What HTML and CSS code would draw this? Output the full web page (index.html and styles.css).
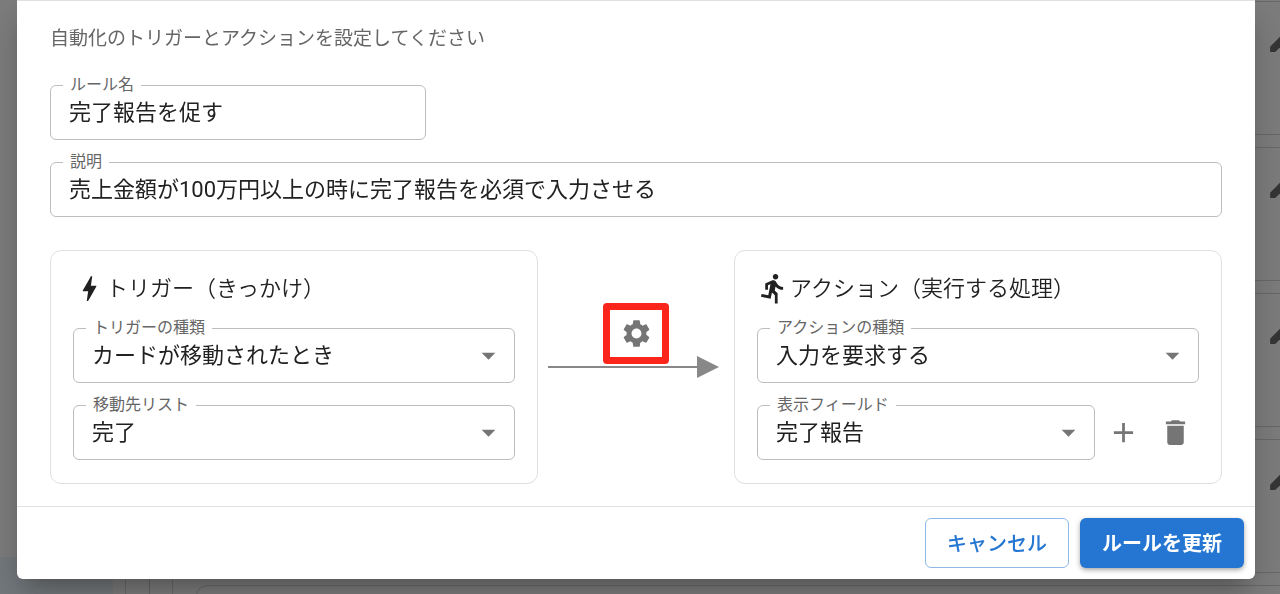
FILE: index.html
```html
<!DOCTYPE html>
<html lang="ja">
<head>
  <meta charset="UTF-8">
  <title>ルールの編集</title>
  <link rel="stylesheet" href="styles.css">
</head>
<body>
  <div class="app" aria-hidden="true">
    <div class="sidebar"><div class="sidebar-item"></div></div>
    <div class="board">
      <div class="board-inner">
        <div class="list">
          <div class="card"><svg class="icon" viewBox="0 0 24 24"><path d="M3 17.25V21h3.75L17.81 9.94l-3.75-3.75L3 17.25z"/></svg></div>
          <div class="card"><svg class="icon" viewBox="0 0 24 24"><path d="M3 17.25V21h3.75L17.81 9.94l-3.75-3.75L3 17.25z"/></svg></div>
          <div class="card"><svg class="icon" viewBox="0 0 24 24"><path d="M3 17.25V21h3.75L17.81 9.94l-3.75-3.75L3 17.25z"/></svg></div>
          <div class="card"><svg class="icon" viewBox="0 0 24 24"><path d="M3 17.25V21h3.75L17.81 9.94l-3.75-3.75L3 17.25z"/></svg></div>
          <div class="card"></div>
        </div>
      </div>
    </div>
  </div>

  <div class="backdrop">
    <form class="dialog" role="dialog" aria-describedby="lead">
      <div class="dialog-body">
        <p class="lead" id="lead">自動化のトリガーとアクションを設定してください</p>

        <div class="fields">
          <div class="field field-short">
            <label for="name">ルール名</label>
            <input type="text" id="name" value="完了報告を促す">
          </div>
          <div class="field">
            <label for="description">説明</label>
            <input type="text" id="description" value="売上金額が100万円以上の時に完了報告を必須で入力させる">
          </div>
        </div>

        <div class="flow">
          <section class="panel">
            <h2>
              <svg class="icon" viewBox="0 0 24 24"><path d="M11 21h-1l1-7H7.5c-.58 0-.57-.32-.38-.66.19-.34.05-.08.07-.12C8.48 10.94 10.42 7.54 13 3h1l-1 7h3.5c.49 0 .56.33.47.51l-.07.15C12.96 17.55 11 21 11 21z"/></svg>
              トリガー（きっかけ）
            </h2>
            <div class="fields">
              <div class="field">
                <label for="trigger">トリガーの種類</label>
                <select id="trigger"><option>カードが移動されたとき</option></select>
                <svg class="icon caret" viewBox="0 0 24 24"><path d="M7 10l5 5 5-5z"/></svg>
              </div>
              <div class="field">
                <label for="target">移動先リスト</label>
                <select id="target"><option>完了</option></select>
                <svg class="icon caret" viewBox="0 0 24 24"><path d="M7 10l5 5 5-5z"/></svg>
              </div>
            </div>
          </section>

          <div class="connector">
            <button type="button" class="condition" aria-label="条件を設定">
              <svg class="icon" viewBox="0 0 24 24"><path d="M19.14 12.94c.04-.3.06-.61.06-.94 0-.32-.02-.64-.07-.94l2.03-1.58c.18-.14.23-.41.12-.61l-1.92-3.32c-.12-.22-.37-.29-.59-.22l-2.39.96c-.5-.38-1.03-.7-1.62-.94l-.36-2.54c-.04-.24-.24-.41-.48-.41h-3.84c-.24 0-.43.17-.47.41l-.36 2.54c-.59.24-1.13.57-1.62.94l-2.39-.96c-.22-.08-.47 0-.59.22L2.74 8.87c-.12.21-.08.47.12.61l2.03 1.58c-.05.3-.09.63-.09.94s.02.64.07.94l-2.03 1.58c-.18.14-.23.41-.12.61l1.92 3.32c.12.22.37.29.59.22l2.39-.96c.5.38 1.03.7 1.62.94l.36 2.54c.05.24.24.41.48.41h3.84c.24 0 .44-.17.47-.41l.36-2.54c.59-.24 1.13-.56 1.62-.94l2.39.96c.22.08.47 0 .59-.22l1.92-3.32c.12-.22.07-.47-.12-.61l-2.01-1.58zM12 15.6c-1.98 0-3.6-1.62-3.6-3.6s1.62-3.6 3.6-3.6 3.6 1.62 3.6 3.6-1.62 3.6-3.6 3.6z"/></svg>
            </button>
            <div class="arrow">
              <span class="arrow-line"></span>
              <svg class="arrow-head" viewBox="0 0 22 22"><path d="M0 0l22 11L0 22z"/></svg>
            </div>
          </div>

          <section class="panel">
            <h2>
              <svg class="icon" viewBox="0 0 24 24"><path d="M13.49 5.48c1.1 0 2-.9 2-2s-.9-2-2-2-2 .9-2 2 .9 2 2 2zm-3.6 13.9l1-4.4 2.1 2v6h2v-7.5l-2.1-2 .6-3c1.3 1.5 3.3 2.5 5.5 2.5v-2c-1.9 0-3.5-1-4.3-2.4l-1-1.6c-.4-.6-1-1-1.7-1-.3 0-.5.1-.8.1l-5.2 2.2v4.7h2v-3.4l1.8-.7-1.6 8.1-4.9-1-.4 2 7 1.4z"/></svg>
              アクション（実行する処理）
            </h2>
            <div class="fields">
              <div class="field">
                <label for="action">アクションの種類</label>
                <select id="action"><option>入力を要求する</option></select>
                <svg class="icon caret" viewBox="0 0 24 24"><path d="M7 10l5 5 5-5z"/></svg>
              </div>
              <div class="field-row">
                <div class="field">
                  <label for="display">表示フィールド</label>
                  <select id="display"><option>完了報告</option></select>
                  <svg class="icon caret" viewBox="0 0 24 24"><path d="M7 10l5 5 5-5z"/></svg>
                </div>
                <button type="button" class="icon-button" aria-label="追加">
                  <svg class="icon" viewBox="0 0 24 24"><path d="M19 13h-6v6h-2v-6H5v-2h6V5h2v6h6v2z"/></svg>
                </button>
                <button type="button" class="icon-button" aria-label="削除">
                  <svg class="icon" viewBox="0 0 24 24"><path d="M6 19c0 1.1.9 2 2 2h8c1.1 0 2-.9 2-2V7H6v12zM19 4h-3.5l-1-1h-5l-1 1H5v2h14V4z"/></svg>
                </button>
              </div>
            </div>
          </section>
        </div>
      </div>

      <div class="dialog-actions">
        <button type="button" class="btn btn-outlined">キャンセル</button>
        <button type="submit" class="btn btn-primary">ルールを更新</button>
      </div>
    </form>
  </div>
</body>
</html>
```
FILE: styles.css
```css
* {
  box-sizing: border-box;
}

body {
  margin: 0;
  font-family: Roboto, "Noto Sans CJK JP", sans-serif;
  color: #212121;
}

input, select, button {
  font-family: inherit;
  color: inherit;
}

.icon {
  width: 33px;
  height: 33px;
  flex: none;
  fill: currentColor;
}

/* page behind the dialog */
.app {
  position: fixed;
  inset: 0;
  display: flex;
  overflow: hidden;
  background: #f8f8f8;
}

.sidebar {
  width: 113px;
  flex: none;
  display: flex;
  flex-direction: column;
  justify-content: flex-end;
}

.sidebar-item {
  height: 37px;
  background: #e6f0f8;
}

.board {
  flex: 1;
  margin-left: 12px;
  border-left: 1px solid #d4d4d4;
  padding-left: 23px;
}

.board-inner {
  border-left: 1px solid #c8c8c8;
  padding-left: 22px;
}

.list {
  display: flex;
  flex-direction: column;
  gap: 12px;
  margin-right: -31px;
  padding: 1px 0 0 23px;
  border-left: 1px solid #d4d4d4;
}

.card {
  display: flex;
  justify-content: flex-end;
  height: 134px;
  padding: 21px 11px;
  border: 1px solid #d0d0d0;
  border-radius: 11px;
  color: #6b6b6b;
}

/* dialog */
.backdrop {
  position: relative;
  min-height: 100vh;
  padding: 0 25px 15px 17px;
  background: rgba(0, 0, 0, 0.5);
}

.dialog {
  background: #fff;
  border-top: 1px solid #e0e0e0;
  border-radius: 0 0 6px 6px;
  box-shadow: 0 15px 21px -10px rgba(0, 0, 0, 0.2), 0 16px 36px 1px rgba(0, 0, 0, 0.18);
}

.dialog-body {
  padding: 24px 33px 22px;
}

.lead {
  margin: 0 0 32px;
  font-size: 19px;
  line-height: 28px;
  color: #666;
}

.fields {
  display: flex;
  flex-direction: column;
  gap: 22px;
}

.field {
  position: relative;
  flex: 1;
}

.field-short {
  width: 376px;
}

.field label {
  position: absolute;
  top: -10px;
  left: 13px;
  padding: 0 7px;
  background: #fff;
  font-size: 16px;
  line-height: 20px;
  color: #666;
}

.field input, .field select {
  display: block;
  width: 100%;
  height: 55px;
  padding: 0 18px;
  border: 1px solid #bdbdbd;
  border-radius: 6px;
  background: #fff;
  font-size: 22px;
  appearance: none;
}

.field input {
  padding-bottom: 6px;
}

.caret {
  position: absolute;
  top: 11px;
  right: 10px;
  color: #757575;
  pointer-events: none;
}

.flow {
  display: grid;
  grid-template-columns: 1fr 196px 1fr;
  margin-top: 33px;
}

.panel {
  padding: 21px 22px 23px;
  border: 1px solid #e0e0e0;
  border-radius: 11px;
}

.panel h2 {
  display: flex;
  align-items: center;
  margin: 0 0 23px;
  font-size: 22px;
  font-weight: 350;
  line-height: 32px;
}

.field-row {
  display: flex;
  align-items: center;
  gap: 4px;
}

.icon-button {
  display: flex;
  align-items: center;
  justify-content: center;
  width: 48px;
  height: 48px;
  padding: 0;
  border: none;
  border-radius: 50%;
  background: none;
  color: #757575;
  cursor: pointer;
}

.connector {
  display: flex;
  flex-direction: column;
  align-items: center;
  padding-top: 53px;
}

.condition {
  display: flex;
  align-items: center;
  justify-content: center;
  width: 66px;
  height: 61px;
  padding: 0;
  border: 7px solid #fb251c;
  border-radius: 4px;
  background: #fff;
  color: #757575;
  cursor: pointer;
}

.arrow {
  display: flex;
  align-items: center;
  align-self: stretch;
  margin: -8px 15px 0 10px;
}

.arrow-line {
  flex: 1;
  height: 2px;
  background: #888;
}

.arrow-head {
  width: 22px;
  height: 22px;
  fill: #888;
}

.dialog-actions {
  display: flex;
  justify-content: flex-end;
  gap: 11px;
  padding: 11px;
  border-top: 1px solid #e0e0e0;
}

.btn {
  height: 50px;
  padding: 0 21px 2px;
  border: 1px solid transparent;
  border-radius: 6px;
  font-size: 20px;
  font-weight: 500;
  cursor: pointer;
}

.btn-outlined {
  border-color: #8fb9e8;
  background: #fff;
  color: #2476d2;
}

.btn-primary {
  background: #2476d2;
  color: #fff;
  font-weight: 600;
  box-shadow: 0 2px 5px rgba(0, 0, 0, 0.35);
}
```
